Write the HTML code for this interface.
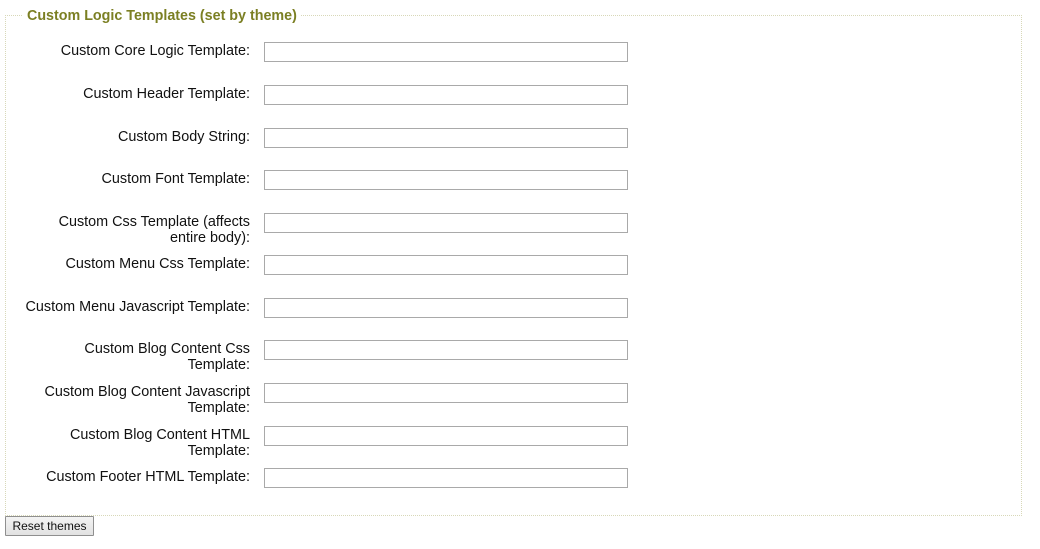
<!DOCTYPE html>
<html><head><meta charset="utf-8"><style>
body{margin:0;width:1040px;height:549px;background:#fff;font-family:"Liberation Sans",Arial,sans-serif;position:relative;overflow:hidden}
.fs{position:absolute;left:5px;top:15px;width:1015px;height:499px;border:1px dotted #d8d8b8}
.lg{position:absolute;left:23px;top:8px;background:#fff;padding:0 4px;font-weight:bold;font-size:14.3px;color:#7b7f23;line-height:16px}
.lb{position:absolute;right:790px;width:240px;text-align:right;font-size:14.4px;line-height:16px;color:#111;padding-top:1px}
.in{position:absolute;left:264px;width:362px;height:18px;border:1px solid #a9a9a9;background:#fff}
.btn{position:absolute;left:5px;top:516px;width:87px;height:18px;border:1px solid #8f8f8f;background:linear-gradient(#f4f4f4,#e2e2e2);font-size:12px;line-height:18px;text-align:center;color:#111;border-radius:1px}
</style></head><body>
<div class="fs"></div>
<div class="lg">Custom Logic Templates (set by theme)</div>

<div class="lb" style="top:42px">Custom Core Logic Template:</div><div class="in" style="top:42px"></div>
<div class="lb" style="top:85px">Custom Header Template:</div><div class="in" style="top:85px"></div>
<div class="lb" style="top:128px">Custom Body String:</div><div class="in" style="top:128px"></div>
<div class="lb" style="top:170px">Custom Font Template:</div><div class="in" style="top:170px"></div>
<div class="lb" style="top:213px;width:200px">Custom Css Template (affects entire body):</div><div class="in" style="top:213px"></div>
<div class="lb" style="top:255px">Custom Menu Css Template:</div><div class="in" style="top:255px"></div>
<div class="lb" style="top:298px;width:250px">Custom Menu Javascript Template:</div><div class="in" style="top:298px"></div>
<div class="lb" style="top:340px;width:180px">Custom Blog Content Css Template:</div><div class="in" style="top:340px"></div>
<div class="lb" style="top:383px;width:220px">Custom Blog Content Javascript Template:</div><div class="in" style="top:383px"></div>
<div class="lb" style="top:426px;width:190px">Custom Blog Content HTML Template:</div><div class="in" style="top:426px"></div>
<div class="lb" style="top:468px">Custom Footer HTML Template:</div><div class="in" style="top:468px"></div>

<div class="btn">Reset themes</div>
</body></html>
